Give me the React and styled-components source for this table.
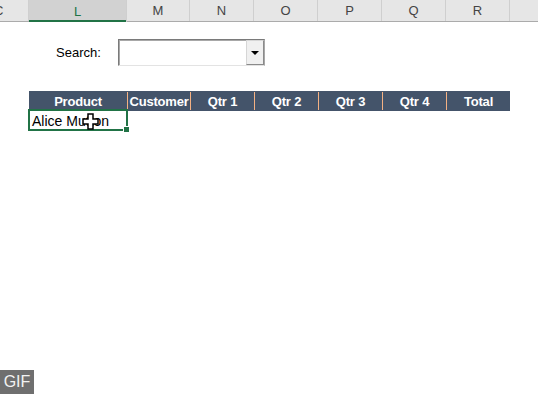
import React from 'react';
import styled, { createGlobalStyle } from 'styled-components';

const GlobalStyle = createGlobalStyle`
    body {
        margin: 0;
        font-family: "Liberation Sans", Arial, sans-serif;
        background: #ffffff;
        overflow: hidden;
    }
`;

const colWidths = '29px 98px 63px 64px 64px 64px 64px 64px 28px';

const Sheet = styled.div`
    width: 538px;
    height: 394px;
    position: relative;
    background: #ffffff;
    overflow: hidden;
`;

const ColumnBar = styled.div`
    display: grid;
    grid-template-columns: ${colWidths};
    height: 22px;
    background: #e6e6e6;
    border-bottom: 1px solid #ababab;
    box-sizing: border-box;
`;

const ColumnLabel = styled.div`
    display: flex;
    align-items: center;
    justify-content: ${props => (props.clipped ? 'flex-start' : 'center')};
    text-indent: ${props => (props.clipped ? '-6px' : '0')};
    font-size: 13px;
    color: ${props => (props.active ? '#217346' : '#444444')};
    background: ${props => (props.active ? '#d2d2d2' : 'transparent')};
    border-right: 1px solid #cfcfcf;
    box-shadow: ${props => (props.active ? 'inset 0 -2px 0 #217346' : 'none')};
    margin-bottom: ${props => (props.active ? '-1px' : '0')};
    overflow: hidden;
    &:last-child {
        border-right: none;
    }
`;

const Body = styled.div`
    display: flex;
    flex-direction: column;
    padding-top: 17px;
`;

const SearchRow = styled.div`
    display: flex;
    align-items: center;
    gap: 17px;
    padding-left: 56px;
    height: 27px;
`;

const SearchLabel = styled.span`
    font-size: 13px;
    color: #000000;
`;

const Combo = styled.div`
    width: 147px;
    height: 27px;
    box-sizing: border-box;
    display: flex;
    justify-content: flex-end;
    background: #ffffff;
    border-top: 1px solid #7a7a7a;
    border-left: 1px solid #7a7a7a;
    border-right: 1px solid #a8a8a8;
    border-bottom: 1px solid #e3e3e3;
    box-shadow: inset 1px 1px 0 #a8a8a8;
`;

const ComboButton = styled.div`
    width: 16px;
    display: flex;
    align-items: center;
    justify-content: center;
    background: #f0f0f0;
    border: 1px solid #d6d6d6;
    border-right-color: #8a8a8a;
    border-bottom-color: #8a8a8a;
`;

const Arrow = styled.span`
    width: 0;
    height: 0;
    border-left: 4px solid transparent;
    border-right: 4px solid transparent;
    border-top: 4px solid #000000;
`;

const Table = styled.div`
    display: flex;
    flex-direction: column;
    margin-top: 25px;
    padding-left: 29px;
`;

const HeadRow = styled.div`
    display: grid;
    grid-template-columns: 98px 63px 64px 64px 64px 64px 64px;
    width: 481px;
    height: 20px;
    background: #44546a;
`;

const HeadCell = styled.div`
    display: flex;
    align-items: center;
    justify-content: center;
    font-size: 13px;
    font-weight: bold;
    color: #ffffff;
    white-space: nowrap;
    border-left: ${props => (props.first ? 'none' : '1px solid #f4b183')};
    margin: ${props => (props.first ? '0' : '1px 0')};
    letter-spacing: -0.2px;
`;

const DataRow = styled.div`
    display: flex;
    height: 20px;
`;

const SelectedCell = styled.div`
    position: relative;
    width: 100px;
    height: 22px;
    margin: -2px 0 0 -1px;
    box-sizing: border-box;
    border: 2px solid #217346;
    display: flex;
    align-items: center;
    padding: 1px 0 0 2px;
    font-size: 14px;
    color: #000000;
`;

const FillHandle = styled.span`
    position: absolute;
    right: -4px;
    bottom: -4px;
    width: 5px;
    height: 5px;
    background: #217346;
    border: 1px solid #ffffff;
`;

const Cursor = styled.svg`
    position: absolute;
    left: 82px;
    top: 113px;
`;

const GifBadge = styled.div`
    position: absolute;
    left: 0;
    bottom: 0;
    width: 34px;
    height: 24px;
    background: #6f6f6f;
    color: #f2f2f2;
    font-size: 16px;
    display: flex;
    align-items: center;
    justify-content: center;
`;

const columns = ['C', 'L', 'M', 'N', 'O', 'P', 'Q', 'R', ''];
const headers = ['Product', 'Customer', 'Qtr 1', 'Qtr 2', 'Qtr 3', 'Qtr 4', 'Total'];

export default function App() {
    return (
        <Sheet>
            <GlobalStyle />
            <ColumnBar>
                {columns.map((c, i) => (
                    <ColumnLabel key={i} active={c === 'L'} clipped={i === 0}>
                        {c}
                    </ColumnLabel>
                ))}
            </ColumnBar>
            <Body>
                <SearchRow>
                    <SearchLabel>Search:</SearchLabel>
                    <Combo>
                        <ComboButton>
                            <Arrow />
                        </ComboButton>
                    </Combo>
                </SearchRow>
                <Table>
                    <HeadRow>
                        {headers.map((h, i) => (
                            <HeadCell key={h} first={i === 0}>{h}</HeadCell>
                        ))}
                    </HeadRow>
                    <DataRow>
                        <SelectedCell>
                            Alice Mutton
                            <FillHandle />
                        </SelectedCell>
                    </DataRow>
                </Table>
            </Body>
            <Cursor width="17" height="17" viewBox="0 0 17 17">
                <path
                    d="M6 1h5v5h5v5h-5v5h-5v-5h-5v-5h5z"
                    fill="#ffffff"
                    stroke="#000000"
                    strokeWidth="1.5"
                />
            </Cursor>
            <GifBadge>GIF</GifBadge>
        </Sheet>
    );
}
